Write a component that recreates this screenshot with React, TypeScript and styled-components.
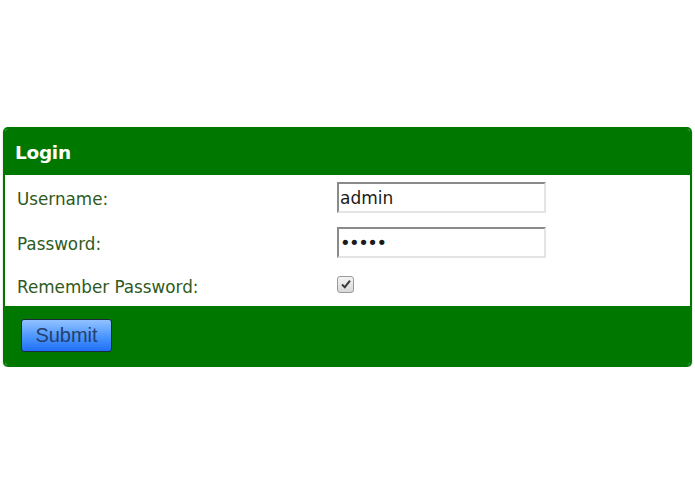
import styled, { createGlobalStyle } from "styled-components";

const GlobalStyle = createGlobalStyle`
  html, body {
    margin: 0;
    padding: 0;
    background: #ffffff;
  }
  body {
    font-family: "DejaVu Sans", Verdana, sans-serif;
  }
`;

const Page = styled.div`
  padding: 127px 3px 0 3px;
  width: 689px;
`;

const Panel = styled.form`
  display: flex;
  flex-direction: column;
  border: 2px solid #007800;
  border-radius: 5px;
  overflow: hidden;
  box-shadow: 0 1px 2px rgba(0, 0, 0, 0.25);
`;

const Header = styled.div`
  background: #007800;
  height: 46px;
  display: flex;
  align-items: center;
  padding-left: 10px;
  color: #ffffff;
  font-weight: bold;
  font-size: 18.5px;
  letter-spacing: -0.3px;
`;

const Body = styled.div`
  background: #ffffff;
  display: grid;
  grid-template-columns: 332px 1fr;
  grid-template-rows: 45px 45px 41px;
`;

const Label = styled.label`
  display: flex;
  align-items: center;
  padding-left: 12px;
  padding-top: 3px;
  color: #2e5a22;
  font-size: 16.8px;
`;

const Cell = styled.div`
  display: flex;
  align-items: center;
`;

const TextInput = styled.input<{ $secret?: boolean }>`
  box-sizing: border-box;
  width: 209px;
  height: 31px;
  margin: 0;
  padding: 1px 1px;
  border-style: solid;
  border-width: 2px;
  border-color: #8a8a8a #e4e4e4 #e4e4e4 #8a8a8a;
  font-family: "DejaVu Sans", Verdana, sans-serif;
  font-size: ${(p) => (p.$secret ? "18px" : "17px")};
  letter-spacing: ${(p) => (p.$secret ? "-1.5px" : "0")};
  color: #1a1a1a;
  outline: none;
`;

const Check = styled.span`
  box-sizing: border-box;
  width: 17px;
  height: 17px;
  border: 1px solid #9a9a9a;
  border-radius: 3px;
  background: linear-gradient(#f4f4f4, #d8d8d8);
  display: flex;
  align-items: center;
  justify-content: center;
  margin-top: -3px;
`;

const Footer = styled.div`
  background: #007800;
  height: 59px;
  display: flex;
  align-items: center;
  padding-left: 16px;
`;

const SubmitButton = styled.button`
  box-sizing: border-box;
  width: 91px;
  height: 33px;
  border: 1px solid #1b2a3d;
  border-radius: 3px;
  background: linear-gradient(#92c2ff, #4a95ff 55%, #1f6ff5);
  color: #23406e;
  font-family: "Liberation Sans", Arial, sans-serif;
  font-size: 20px;
  padding: 0;
  margin-top: -1px;
`;

export default function App() {
  return (
    <Page>
      <GlobalStyle />
      <Panel onSubmit={(e) => e.preventDefault()}>
        <Header>Login</Header>
        <Body>
          <Label>Username:</Label>
          <Cell>
            <TextInput type="text" defaultValue="admin" />
          </Cell>
          <Label>Password:</Label>
          <Cell>
            <TextInput type="password" defaultValue="admin" $secret />
          </Cell>
          <Label>Remember Password:</Label>
          <Cell>
            <Check>
              <svg width="12" height="12" viewBox="0 0 12 12">
                <path d="M2 6.5 L4.8 9.2 L10 2.6" fill="none" stroke="#3a3a3a" strokeWidth="2" />
              </svg>
            </Check>
          </Cell>
        </Body>
        <Footer>
          <SubmitButton type="submit">Submit</SubmitButton>
        </Footer>
      </Panel>
    </Page>
  );
}
